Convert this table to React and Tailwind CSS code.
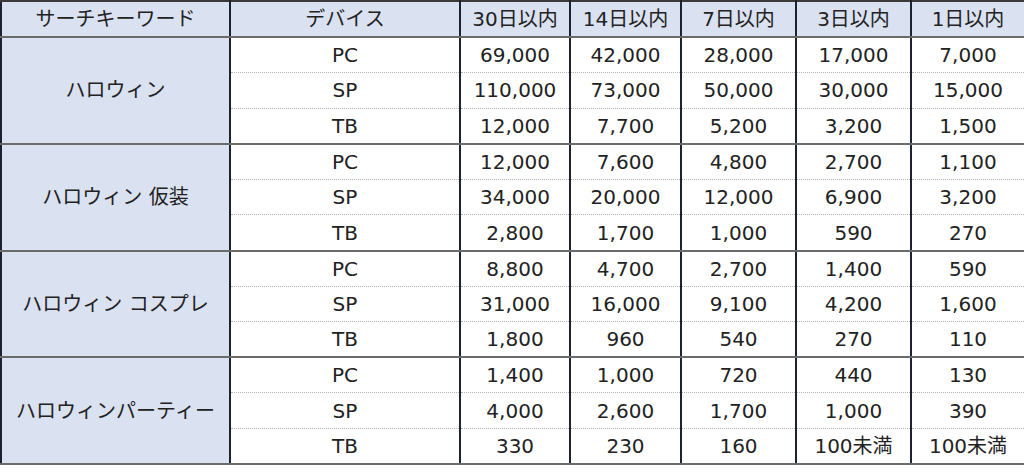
import React from "react";

const groups = [
  { kw: "ハロウィン", rows: [["PC","69,000","42,000","28,000","17,000","7,000"],["SP","110,000","73,000","50,000","30,000","15,000"],["TB","12,000","7,700","5,200","3,200","1,500"]] },
  { kw: "ハロウィン 仮装", rows: [["PC","12,000","7,600","4,800","2,700","1,100"],["SP","34,000","20,000","12,000","6,900","3,200"],["TB","2,800","1,700","1,000","590","270"]] },
  { kw: "ハロウィン コスプレ", rows: [["PC","8,800","4,700","2,700","1,400","590"],["SP","31,000","16,000","9,100","4,200","1,600"],["TB","1,800","960","540","270","110"]] },
  { kw: "ハロウィンパーティー", rows: [["PC","1,400","1,000","720","440","130"],["SP","4,000","2,600","1,700","1,000","390"],["TB","330","230","160","100未満","100未満"]] },
];

const headers = ["サーチキーワード", "デバイス", "30日以内", "14日以内", "7日以内", "3日以内", "1日以内"];
const widths = ["w-[229px]", "w-[230px]", "w-[110px]", "w-[111px]", "w-[115px]", "w-[115px]", "w-[114px]"];

export default function App() {
  return (
    <div className="w-[1024px] h-[473px] bg-white overflow-hidden font-['DejaVu_Sans','Noto_Sans_CJK_JP',sans-serif] text-[20px] text-[#222222]">
      <table className="table-fixed border-collapse w-[1024px]">
        <colgroup>
          {widths.map((w, i) => <col key={i} className={w} />)}
        </colgroup>
        <thead>
          <tr className="h-[36px] bg-[#dae1f1]">
            {headers.map((h, i) => (
              <th key={i} className="font-normal text-center p-0 border-x-2 border-x-[#1e2230] border-t-2 border-t-[#3a3a3a] border-b-2 border-b-[#6b6b6b] leading-none">
                {h}
              </th>
            ))}
          </tr>
        </thead>
        <tbody>
          {groups.map((g, gi) =>
            g.rows.map((r, ri) => (
              <tr key={gi + "-" + ri} className="h-[35.6px]">
                {ri === 0 && (
                  <td rowSpan={3} className="bg-[#dae1f1] text-center p-0 border-x-2 border-x-[#1e2230] border-y-2 border-y-[#6b6b6b] leading-none">
                    {g.kw}
                  </td>
                )}
                {r.map((c, ci) => (
                  <td
                    key={ci}
                    className={
                      "text-center p-0 leading-none border-x-2 border-x-[#1e2230] " +
                      (ri === 0 ? "border-t-2 border-t-[#6b6b6b] " : "") +
                      (ri === 2
                        ? "border-b-2 border-b-[#6b6b6b]"
                        : "border-b-[1px] [border-bottom-style:dotted] border-b-[#b4b4b4]")
                    }
                  >
                    {c}
                  </td>
                ))}
              </tr>
            ))
          )}
        </tbody>
      </table>
    </div>
  );
}
